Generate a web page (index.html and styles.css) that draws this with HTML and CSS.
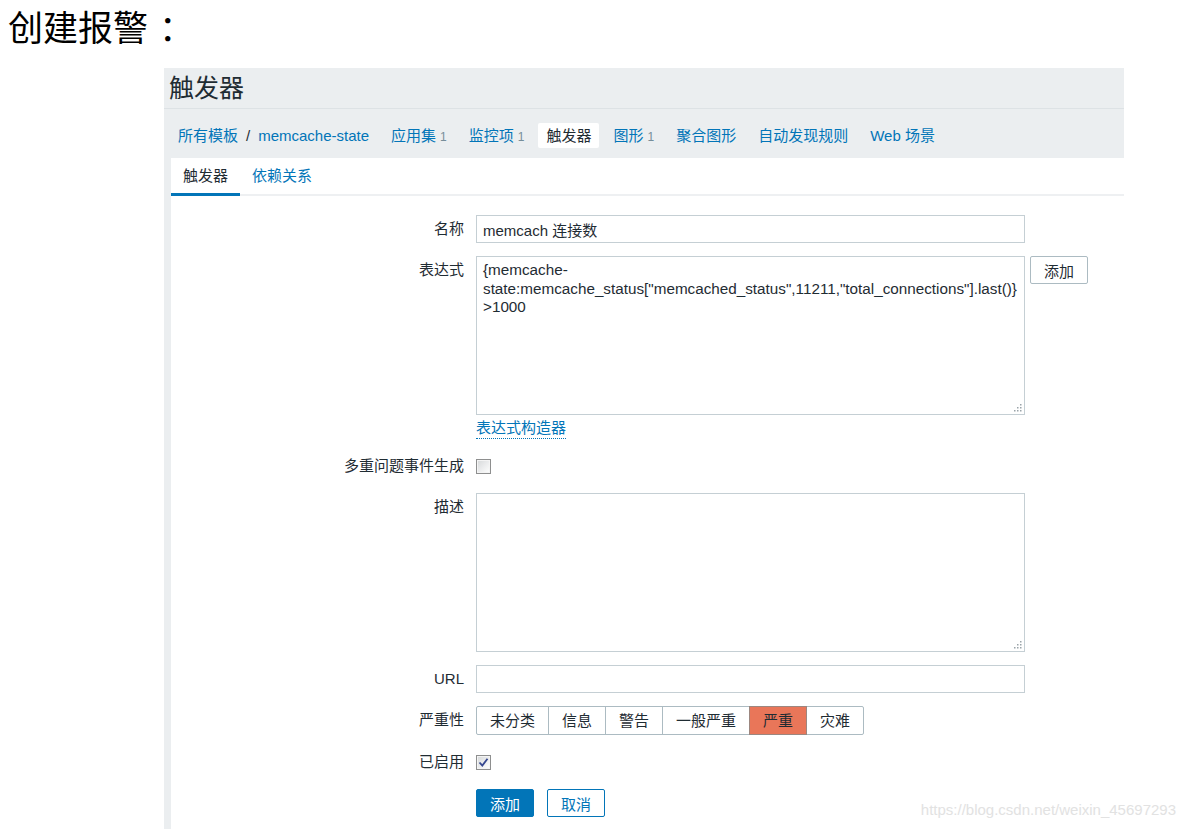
FILE: index.html
```html
<!DOCTYPE html>
<html lang="zh-CN">
<head>
<meta charset="utf-8">
<title>创建报警</title>
<link rel="stylesheet" href="styles.css">
</head>
<body>
<h1 class="page-title">创建报警<span class="colon">：</span></h1>
<div class="panel">
  <div class="panel-head"><h2 class="panel-title">触发器</h2></div>
  <nav class="nav">
    <div class="nav-item"><a class="link">所有模板</a><span class="sep">/</span><a class="link">memcache-state</a></div>
    <div class="nav-item"><a class="link">应用集</a><span class="count">1</span></div>
    <div class="nav-item"><a class="link">监控项</a><span class="count">1</span></div>
    <div class="nav-item active">触发器</div>
    <div class="nav-item"><a class="link">图形</a><span class="count">1</span></div>
    <div class="nav-item"><a class="link">聚合图形</a></div>
    <div class="nav-item"><a class="link">自动发现规则</a></div>
    <div class="nav-item"><a class="link">Web 场景</a></div>
  </nav>
  <div class="content">
    <div class="tabs">
      <div class="tab active">触发器</div>
      <div class="tab"><a class="link">依赖关系</a></div>
    </div>
    <form class="form">
      <label class="label">名称</label>
      <div class="field"><input class="input" value="memcach 连接数"></div>

      <label class="label">表达式</label>
      <div class="field-col">
        <div class="field">
          <div class="ta-wrap">
            <textarea class="textarea expr">{memcache-
state:memcache_status["memcached_status",11211,"total_connections"].last()}
&gt;1000</textarea>
            <svg class="grip" width="8" height="8" viewBox="0 0 8 8"><g fill="#9aa4a9"><rect x="6" y="0" width="1.5" height="1.5"/><rect x="3" y="3" width="1.5" height="1.5"/><rect x="6" y="3" width="1.5" height="1.5"/><rect x="0" y="6" width="1.5" height="1.5"/><rect x="3" y="6" width="1.5" height="1.5"/><rect x="6" y="6" width="1.5" height="1.5"/></g></svg>
          </div>
          <button type="button" class="btn btn-grey">添加</button>
        </div>
        <a class="builder">表达式构造器</a>
      </div>

      <label class="label">多重问题事件生成</label>
      <div class="field center"><span class="cb"></span></div>

      <label class="label">描述</label>
      <div class="field">
        <div class="ta-wrap">
          <textarea class="textarea"></textarea>
          <svg class="grip" width="8" height="8" viewBox="0 0 8 8"><g fill="#9aa4a9"><rect x="6" y="0" width="1.5" height="1.5"/><rect x="3" y="3" width="1.5" height="1.5"/><rect x="6" y="3" width="1.5" height="1.5"/><rect x="0" y="6" width="1.5" height="1.5"/><rect x="3" y="6" width="1.5" height="1.5"/><rect x="6" y="6" width="1.5" height="1.5"/></g></svg>
        </div>
      </div>

      <label class="label">URL</label>
      <div class="field"><input class="input" value=""></div>

      <label class="label">严重性</label>
      <div class="field">
        <div class="seg">
          <span class="seg-btn">未分类</span>
          <span class="seg-btn">信息</span>
          <span class="seg-btn">警告</span>
          <span class="seg-btn">一般严重</span>
          <span class="seg-btn selected">严重</span>
          <span class="seg-btn">灾难</span>
        </div>
      </div>

      <label class="label">已启用</label>
      <div class="field center"><span class="cb checked"><svg width="11" height="11" viewBox="0 0 11 11"><path d="M1.5 5.5 L4.3 8.5 L9.5 1.8" fill="none" stroke="#35478f" stroke-width="1.8"/></svg></span></div>

      <span class="label"></span>
      <div class="field buttons">
        <button type="button" class="btn btn-primary">添加</button>
        <button type="button" class="btn btn-alt">取消</button>
      </div>
    </form>
  </div>
</div>
<div class="watermark">https://blog.csdn.net/weixin_45697293</div>
</body>
</html>
```

FILE: styles.css
```css
html, body {
  margin: 0;
  height: 100%;
  overflow: hidden;
  background: #fff;
}
body {
  font-family: "Liberation Sans", "Noto Sans CJK SC", sans-serif;
  font-size: 15px;
  color: #1f2c33;
}
.page-title {
  margin: 0;
  padding-left: 8px;
  font-family: "Noto Sans CJK SC", sans-serif;
  font-weight: 400;
  font-size: 35px;
  line-height: 52px;
  color: #000;
}
.colon {
  margin-left: 11px;
}
.panel {
  margin: 16px 0 0 164px;
  width: 960px;
  height: 761px;
  background: #ebeef0;
  display: flex;
  flex-direction: column;
}
.panel-head {
  height: 40px;
  border-bottom: 1px solid #dde2e5;
  padding-left: 5px;
  display: flex;
  align-items: center;
}
.panel-title {
  margin: 0;
  font-size: 25px;
  font-weight: 400;
  line-height: 30px;
  color: #1f2c33;
}
.nav {
  display: flex;
  gap: 6px;
  padding: 14px 0 10px 6px;
}
.nav-item {
  height: 25px;
  line-height: 25px;
  padding: 0 8px;
  white-space: nowrap;
}
.nav-item.active {
  background: #fff;
  border-radius: 2px;
}
.link {
  color: #0275b8;
  text-decoration: none;
}
.sep {
  margin: 0 8px;
}
.count {
  margin-left: 4px;
  font-size: 12px;
  color: #768d99;
}
.content {
  flex: 1;
  margin-left: 7px;
  background: #fff;
}
.tabs {
  display: flex;
  height: 38px;
  box-shadow: inset 0 -2px 0 #eef0f2;
}
.tab {
  padding: 0 12px;
  height: 35px;
  line-height: 35px;
}
.tab.active {
  border-bottom: 3px solid #0275b8;
}
.form {
  display: grid;
  grid-template-columns: 293px 1fr;
  column-gap: 12px;
  row-gap: 13px;
  padding-top: 19px;
}
.label {
  text-align: right;
  line-height: 28px;
  white-space: nowrap;
}
.field {
  display: flex;
  align-items: flex-start;
  gap: 5px;
  min-height: 28px;
}
.field.center {
  align-items: center;
}
.field-col {
  display: flex;
  flex-direction: column;
  align-items: flex-start;
}
.input {
  width: 549px;
  height: 28px;
  box-sizing: border-box;
  margin: 0;
  border: 1px solid #c5cfd4;
  padding: 0 6px;
  font: inherit;
  color: #1f2c33;
  outline: none;
}
.ta-wrap {
  position: relative;
  width: 549px;
  height: 159px;
}
.textarea {
  display: block;
  margin: 0;
  width: 100%;
  height: 100%;
  box-sizing: border-box;
  border: 1px solid #c5cfd4;
  padding: 4px 6px;
  font: inherit;
  line-height: 18.5px;
  color: #1f2c33;
  resize: none;
  white-space: pre;
  overflow: hidden;
  outline: none;
}
.textarea.expr {
  font-size: 15.25px;
}
.grip {
  position: absolute;
  right: 3px;
  bottom: 3px;
}
.builder {
  margin-top: 3px;
  line-height: 20px;
  color: #0275b8;
  border-bottom: 1px dotted #0275b8;
}
.btn {
  height: 28px;
  margin: 0;
  padding: 0 13px;
  border: 1px solid #acbbc2;
  border-radius: 2px;
  background: #fff;
  font: inherit;
  color: #1f2c33;
}
.btn-primary {
  background: #0275b8;
  border-color: #0275b8;
  color: #fff;
}
.btn-alt {
  border-color: #0275b8;
  color: #0275b8;
}
.buttons {
  gap: 13px;
}
.seg {
  display: flex;
}
.seg-btn {
  height: 29px;
  box-sizing: border-box;
  line-height: 27px;
  padding: 0 13px;
  border: 1px solid #acbbc2;
  margin-left: -1px;
  background: #fff;
}
.seg-btn:first-child {
  margin-left: 0;
  border-radius: 2px 0 0 2px;
}
.seg-btn:last-child {
  border-radius: 0 2px 2px 0;
}
.seg-btn.selected {
  background: #e97659;
  border-color: #9c8780;
  position: relative;
}
.cb {
  width: 15px;
  height: 15px;
  box-sizing: border-box;
  border: 1px solid #8e8f8f;
  background: linear-gradient(135deg, #d6d8da, #ffffff);
  box-shadow: inset 0 0 0 1px #f4f4f4;
  display: inline-flex;
  align-items: center;
  justify-content: center;
}
.watermark {
  position: absolute;
  right: 10px;
  bottom: 10px;
  font-family: "Liberation Sans", sans-serif;
  font-size: 15px;
  line-height: 18px;
  color: #e2e2e2;
}
```
